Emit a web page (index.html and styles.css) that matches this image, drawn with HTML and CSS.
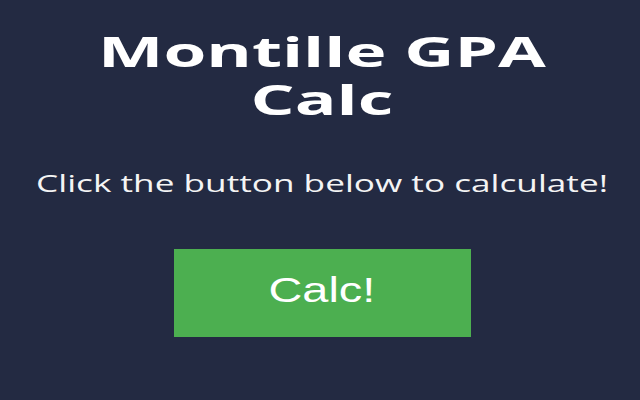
FILE: index.html
```html
<!DOCTYPE html>
<html>
<head>
<meta charset="utf-8">
<link rel="stylesheet" href="styles.css">
</head>
<body>
<main class="popup">
  <h1 class="title">Montille GPA Calc</h1>
  <p class="subtitle">Click the button below to calculate!</p>
  <button class="calc-btn"><span class="calc-label">Calc!</span></button>
</main>
</body>
</html>
```
FILE: styles.css
```css
html, body {
  margin: 0;
  padding: 0;
  background: #232a42;
  width: 640px;
  height: 400px;
  overflow: hidden;
}
.popup {
  display: flex;
  flex-direction: column;
  align-items: center;
  padding: 27px 0 0 4px;
  font-family: "Open Sans", "DejaVu Sans", sans-serif;
  color: #ffffff;
  text-align: center;
}
.title {
  margin: 0;
  font-size: 42px;
  font-weight: 700;
  line-height: 48px;
  width: 300px;
  transform: scaleX(1.65);
}
.subtitle {
  margin: 43px 0 0 0;
  font-size: 24px;
  line-height: 33px;
  font-weight: 500;
  color: #f4f4f4;
  white-space: nowrap;
  transform: scaleX(1.466);
}
.calc-btn {
  margin-top: 50px;
  width: 297px;
  height: 88px;
  padding: 0 0 6px 0;
  background: #4caf50;
  border: none;
  color: #ffffff;
  font-family: "Liberation Sans", Arial, sans-serif;
  font-size: 35px;
}
.calc-label {
  display: inline-block;
  transform: scaleX(1.34);
}
```
